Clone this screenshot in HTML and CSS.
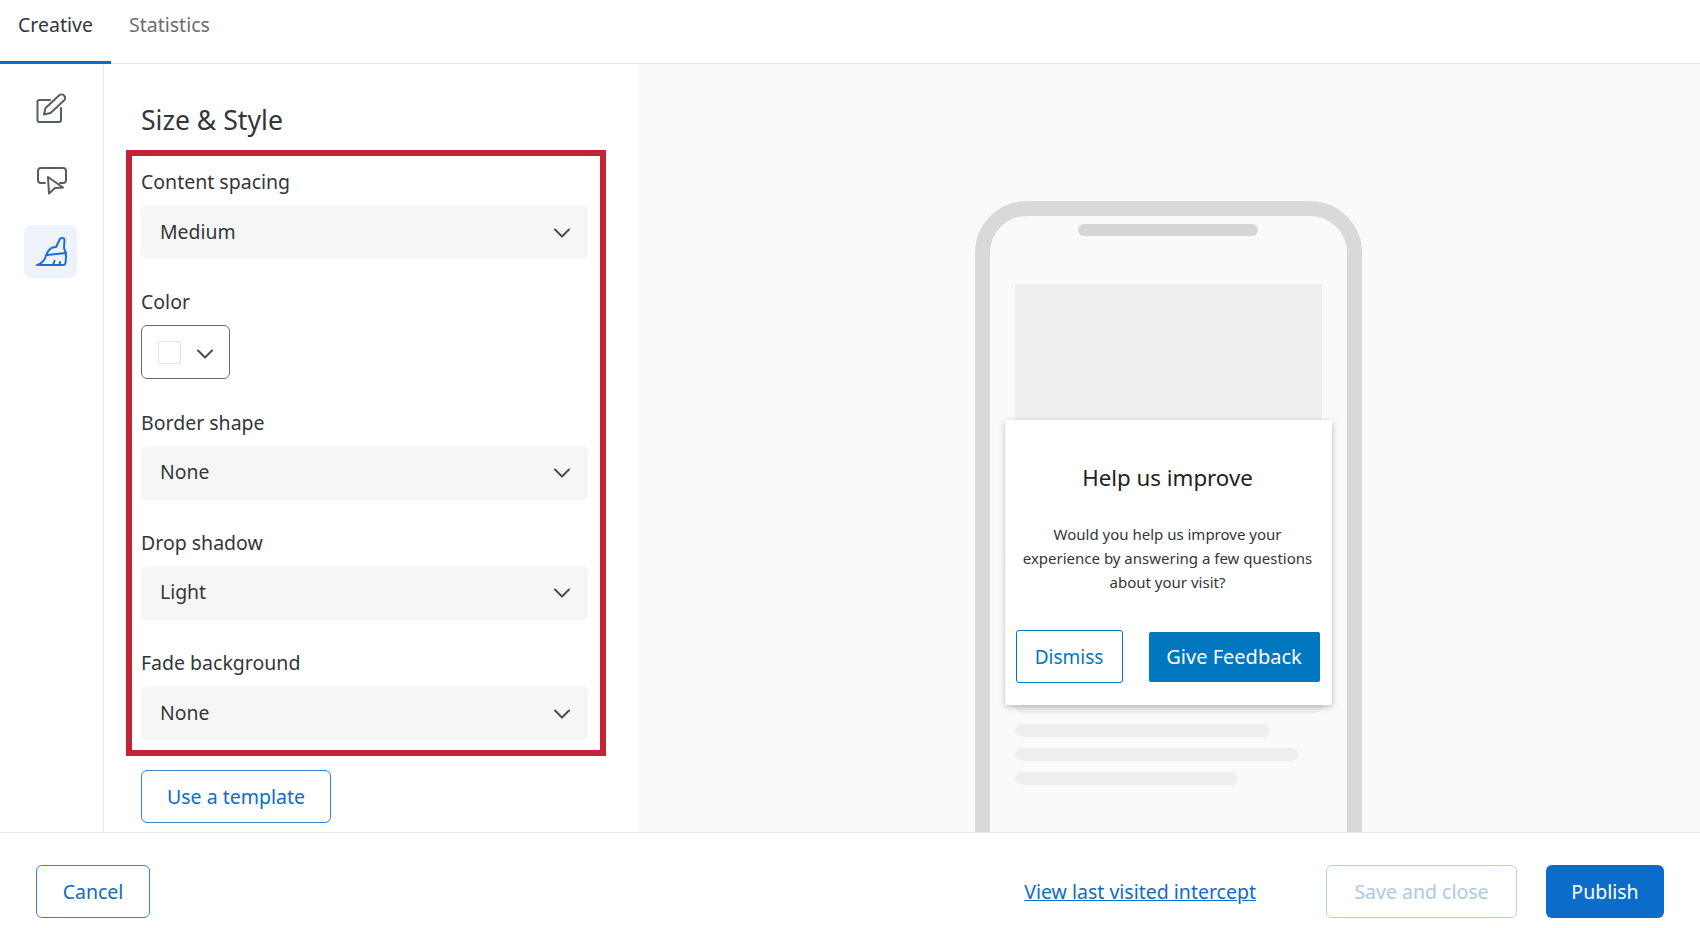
FILE: index.html
```html
<!DOCTYPE html>
<html lang="en">
<head>
  <meta charset="UTF-8">
  <title>Size &amp; Style</title>
  <link rel="stylesheet" href="styles.css">
</head>

<body>
  <header class="tabs">
    <a class="tab active" href="#">Creative</a>
    <a class="tab" href="#">Statistics</a>
  </header>

  <main class="workspace">
    <nav class="rail">
      <a class="rail-item" href="#">
        <svg viewBox="0 0 32 32" width="32" height="32" fill="none" stroke="currentColor" stroke-width="2" stroke-linecap="round" stroke-linejoin="round">
          <path d="M15 8H4.500a2 2 0 0 0-2 2v18a2 2 0 0 0 2 2H24a2 2 0 0 0 2-2V16"/>
          <path d="M9 22.500l1.500-6.500L24 3.500c1.500-1.500 3.500-1.500 5 0s1.500 3.500 0 5L15.500 21z"/>
        </svg>
      </a>
      <a class="rail-item" href="#">
        <svg viewBox="0 0 32 32" width="32" height="32" fill="none" stroke="currentColor" stroke-width="2" stroke-linecap="round" stroke-linejoin="round">
          <path d="M10 19H6a3 3 0 0 1-3-3V7a3 3 0 0 1 3-3h22a3 3 0 0 1 3 3v9a3 3 0 0 1-3 3h-3"/>
          <path d="M13 13l15 10.500-8 .5-6 5.500z"/>
        </svg>
      </a>
      <a class="rail-item selected" href="#">
        <svg viewBox="0 0 32 32" width="32" height="32" fill="none" stroke="currentColor" stroke-width="2" stroke-linecap="round" stroke-linejoin="round">
          <path d="M2 29h26q2 0 2.500-2l.5-6q0-5-2-9l.5-8q0-2-2.500-2-2 0-2.500 2L21 11q-4 0-6 2-3 3-4.500 8-2 6-8.500 8z"/>
          <path d="M12 19l19-2M18 29l1.500-4M24.500 29l.5-3"/>
        </svg>
      </a>
    </nav>

    <section class="panel">
      <h1 class="panel-title">Size &amp; Style</h1>

      <div class="highlight">
        <div class="field">
          <div class="field-label">Content spacing</div>
          <div class="select">
            <span>Medium</span>
            <svg class="chevron" viewBox="0 0 16 10" width="16" height="10"><path d="M1 1.500l7 7 7-7"/></svg>
          </div>
        </div>
        <div class="field">
          <div class="field-label">Color</div>
          <div class="color-picker">
            <span class="swatch"></span>
            <svg class="chevron" viewBox="0 0 16 10" width="16" height="10"><path d="M1 1.500l7 7 7-7"/></svg>
          </div>
        </div>
        <div class="field">
          <div class="field-label">Border shape</div>
          <div class="select">
            <span>None</span>
            <svg class="chevron" viewBox="0 0 16 10" width="16" height="10"><path d="M1 1.500l7 7 7-7"/></svg>
          </div>
        </div>
        <div class="field">
          <div class="field-label">Drop shadow</div>
          <div class="select">
            <span>Light</span>
            <svg class="chevron" viewBox="0 0 16 10" width="16" height="10"><path d="M1 1.500l7 7 7-7"/></svg>
          </div>
        </div>
        <div class="field">
          <div class="field-label">Fade background</div>
          <div class="select">
            <span>None</span>
            <svg class="chevron" viewBox="0 0 16 10" width="16" height="10"><path d="M1 1.500l7 7 7-7"/></svg>
          </div>
        </div>
      </div>

      <a class="btn btn-outline template-btn" href="#">Use a template</a>
    </section>

    <section class="preview">
      <div class="phone">
        <div class="notch"></div>
        <div class="hero"></div>
        <div class="card">
          <h2 class="card-title">Help us improve</h2>
          <p class="card-text">Would you help us improve your experience by answering a few questions about your visit?</p>
          <div class="card-actions">
            <a class="card-btn dismiss" href="#">Dismiss</a>
            <a class="card-btn feedback" href="#">Give Feedback</a>
          </div>
        </div>
        <div class="skeleton skeleton-full"></div>
        <div class="skeleton skeleton-a"></div>
        <div class="skeleton skeleton-b"></div>
        <div class="skeleton skeleton-c"></div>
      </div>
    </section>
  </main>

  <footer class="footer">
    <a class="btn btn-outline cancel-btn" href="#">Cancel</a>
    <div class="footer-right">
      <a class="last-visited" href="#">View last visited intercept</a>
      <a class="btn btn-disabled" href="#">Save and close</a>
      <a class="btn btn-primary" href="#">Publish</a>
    </div>
  </footer>
</body>
</html>
```

FILE: styles.css
```css
* {
  box-sizing: border-box;
}

body {
  font-family: "Noto Sans", sans-serif;
  margin: 0;
  padding: 0;
  height: 100vh;
  display: flex;
  flex-direction: column;
  overflow: hidden;
  background-color: #fff;
  color: #32363a;
}

a {
  text-decoration: none;
}

/* Top tabs */
.tabs {
  display: flex;
  flex: none;
  height: 64px;
  border-bottom: 1px solid #e3e5e8;
}

.tab {
  height: 64px;
  padding: 10px 18px 0;
  font-size: 19.5px;
  line-height: 30px;
  color: #6a6d70;
}

.tab.active {
  width: 111px;
  color: #32363a;
  border-bottom: 3px solid #0b6ccb;
}

.workspace {
  display: flex;
  flex: 1;
  min-height: 0;
}

/* Icon rail */
.rail {
  flex: none;
  width: 104px;
  padding: 17px 2px 0 0;
  display: flex;
  flex-direction: column;
  align-items: center;
  gap: 19px;
  border-right: 1px solid #e8e9ea;
}

.rail-item {
  width: 53px;
  height: 53px;
  display: flex;
  align-items: center;
  justify-content: center;
  border-radius: 8px;
  color: #5a5d60;
}

.rail-item.selected {
  background-color: #eef3fb;
  color: #1a6fcf;
}

/* Settings panel */
.panel {
  flex: none;
  width: 534px;
  padding: 0 0 0 22px;
}

.panel-title {
  margin: 0;
  padding: 36px 0 0 15px;
  height: 86px;
  font-size: 26.6px;
  line-height: 40px;
  font-weight: 400;
}

.highlight {
  width: 480px;
  height: 606px;
  padding: 11px 12px 0 9px;
  border: 6px solid #c12435;
  display: flex;
  flex-direction: column;
  gap: 28.3px;
}

.field-label {
  font-size: 19.5px;
  line-height: 30px;
  margin-bottom: 8px;
}

.select {
  height: 54px;
  padding: 0 18px 2px 19px;
  display: flex;
  align-items: center;
  justify-content: space-between;
  font-size: 19.4px;
  background-color: #f6f6f6;
  border-radius: 6px;
}

.chevron {
  flex: none;
  margin-top: 3px;
  fill: none;
  stroke: #4a4d50;
  stroke-width: 2;
  stroke-linecap: round;
  stroke-linejoin: round;
}

.color-picker {
  width: 89px;
  height: 54px;
  padding: 0 16px;
  display: flex;
  align-items: center;
  justify-content: space-between;
  border: 1.5px solid #6a6d70;
  border-radius: 6px;
}

.swatch {
  width: 23px;
  height: 23px;
  background-color: #fff;
  border: 1.5px solid #e3e3e3;
  border-radius: 2px;
}

.btn {
  display: inline-flex;
  align-items: center;
  justify-content: center;
  height: 53px;
  font-size: 19.5px;
  border-radius: 6px;
}

.btn-outline {
  color: #0b6ccb;
  background-color: #fff;
  border: 1.5px solid #3a82cd;
}

.template-btn {
  width: 190px;
  margin: 14px 0 0 15px;
}

/* Phone preview */
.preview {
  flex: 1;
  display: flex;
  justify-content: center;
  overflow: hidden;
  background-color: #fafafa;
  padding: 137px 2px 0 0;
}

.phone {
  width: 387px;
  height: 900px;
  padding: 8px 25px 0;
  border: 15px solid #d9d9d9;
  border-radius: 52px 52px 0 0;
}

.notch {
  width: 180px;
  height: 12px;
  margin: 0 auto 48px;
  border-radius: 6px;
  background-color: #d6d6d6;
}

.hero {
  height: 136px;
  background-color: #efefef;
}

.card {
  position: relative;
  z-index: 1;
  height: 285px;
  margin: 0 -10px -5px;
  padding: 40px 12px 0 11px;
  background-color: #fff;
  box-shadow: 0 2px 6px rgba(0, 0, 0, 0.25);
  text-align: center;
}

.card-title {
  margin: 0;
  font-size: 22.3px;
  line-height: 36px;
  font-weight: 400;
  color: #222;
}

.card-text {
  margin: 26px 0 0;
  font-size: 15px;
  line-height: 24px;
  color: #32363a;
}

.card-actions {
  display: flex;
  align-items: center;
  justify-content: space-between;
  margin-top: 36px;
}

.card-btn {
  display: flex;
  align-items: center;
  justify-content: center;
  font-size: 19.5px;
}

.dismiss {
  width: 107px;
  height: 53px;
  font-size: 19px;
  color: #0077bf;
  border: 1.5px solid #0077bf;
  border-radius: 3px;
}

.feedback {
  width: 171px;
  height: 50px;
  font-size: 20px;
  color: #fff;
  background-color: #0077bf;
  border-radius: 2px;
}

.skeleton {
  height: 13px;
  margin-bottom: 11px;
  border-radius: 7px;
  background-color: #efefef;
}

.skeleton-a {
  width: 255px;
}

.skeleton-b {
  width: 283px;
}

.skeleton-c {
  width: 223px;
}

/* Bottom actions */
.footer {
  flex: none;
  height: 96px;
  padding: 32px 36px 0 36px;
  display: flex;
  justify-content: space-between;
  align-items: flex-start;
  border-top: 1px solid #e8e9ea;
}

.cancel-btn {
  width: 114px;
}

.footer-right {
  display: flex;
  align-items: center;
}

.last-visited {
  margin-right: 70px;
  font-size: 19.5px;
  color: #0b6ccb;
  text-decoration: underline;
}

.btn-disabled {
  width: 191px;
  margin-right: 29px;
  color: #adc8e9;
  background-color: #fff;
  border: 1.5px solid #b9d0ec;
}

.btn-primary {
  width: 118px;
  color: #fff;
  background-color: #0b6ccb;
}
```
